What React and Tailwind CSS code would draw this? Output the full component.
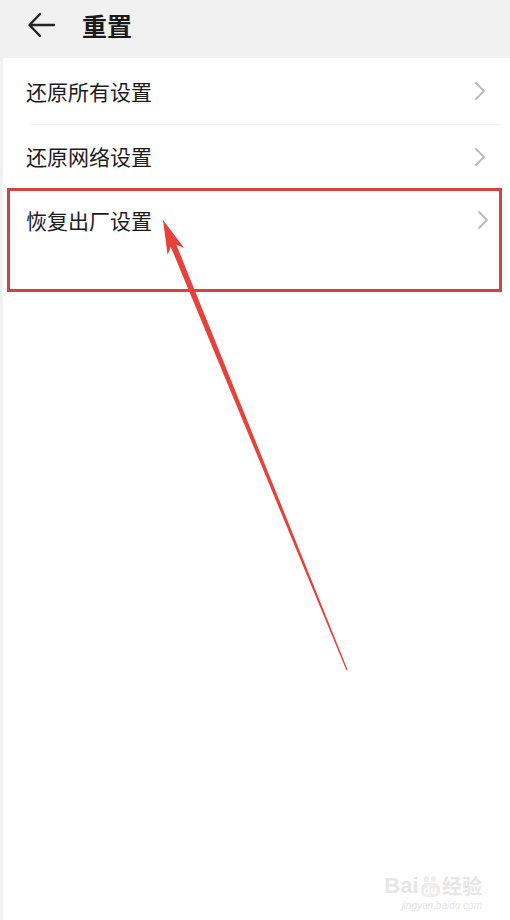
import React from "react";

const Chevron = () => (
  <svg width="12" height="20" viewBox="0 0 12 20" fill="none">
    <path d="M2 2 L10 10 L2 18" stroke="#bdbdbd" strokeWidth="2" strokeLinecap="round" strokeLinejoin="round" />
  </svg>
);

export default function App() {
  const font = { fontFamily: '"Noto Sans CJK SC", "Noto Sans", sans-serif' };
  return (
    <div className="relative w-[510px] h-[920px] bg-[#f1f1f1] overflow-hidden" style={font}>
      <div className="h-[58px] flex items-center pb-[8px] bg-[#f1f1f1]">
        <div className="ml-[27px] w-[30px] flex items-center">
          <svg width="30" height="28" viewBox="0 0 30 28" fill="none">
            <path d="M27 14 H3 M13 3 L2.5 14 L13 25" stroke="#222" strokeWidth="2.4" strokeLinecap="round" strokeLinejoin="round" />
          </svg>
        </div>
        <div className="ml-[25px] text-[25px] font-bold text-[#1a1a1a] leading-none">重置</div>
      </div>
      <div className="ml-[3px] h-[862px] bg-white flex flex-col">
        <div className="h-[66px] flex items-center justify-between pl-[23px] pr-[24px]">
          <span className="text-[21px] text-[#1c1c1c] leading-none">还原所有设置</span>
          <Chevron />
        </div>
        <div className="ml-[27px] mr-[10px] h-px bg-[#efefef]" />
        <div className="h-[63px] flex items-center justify-between pl-[23px] pr-[24px]">
          <span className="text-[21px] text-[#1c1c1c] leading-none">还原网络设置</span>
          <Chevron />
        </div>
        <div className="ml-[4px] mr-[8px] h-[104px] border-[3px] border-[#d9413f] flex items-start justify-between pl-[16px] pr-[10px] pt-[19px]">
          <span className="text-[21px] text-[#1c1c1c] leading-none">恢复出厂设置</span>
          <Chevron />
        </div>
        <div className="flex-1" />
      </div>

      <svg className="absolute left-0 top-0 pointer-events-none" width="510" height="920" viewBox="0 0 510 920">
        <polygon
          points="163,220 184.2,248.1 176.4,244.8 347.6,669.7 346.4,670.3 170.8,247 167.6,254.9"
          fill="#e8403b"
        />
      </svg>

      <div className="absolute right-[28px] bottom-[8px] flex flex-col items-end text-[#e6e6e6] pointer-events-none">
        <div className="flex items-end gap-[2px] leading-none">
          <span className="text-[22px] font-bold" style={{ fontFamily: '"Liberation Sans", sans-serif' }}>Bai</span>
          <span className="flex flex-col items-center">
            <span className="flex gap-[2px] mb-[1px]">
              <span className="w-[5px] h-[6px] rounded-full bg-[#ededed]" />
              <span className="w-[5px] h-[6px] rounded-full bg-[#ededed]" />
            </span>
            <span className="text-[11px] leading-[14px] font-bold bg-[#ededed] text-white rounded-[6px] px-[3px]" style={{ fontFamily: '"Liberation Sans", sans-serif' }}>du</span>
          </span>
          <span className="text-[20px] font-bold leading-[22px]">经验</span>
        </div>
        <span className="text-[10px] italic leading-[12px] mt-[3px]" style={{ fontFamily: '"Liberation Sans", sans-serif' }}>jingyan.baidu.com</span>
      </div>
    </div>
  );
}
